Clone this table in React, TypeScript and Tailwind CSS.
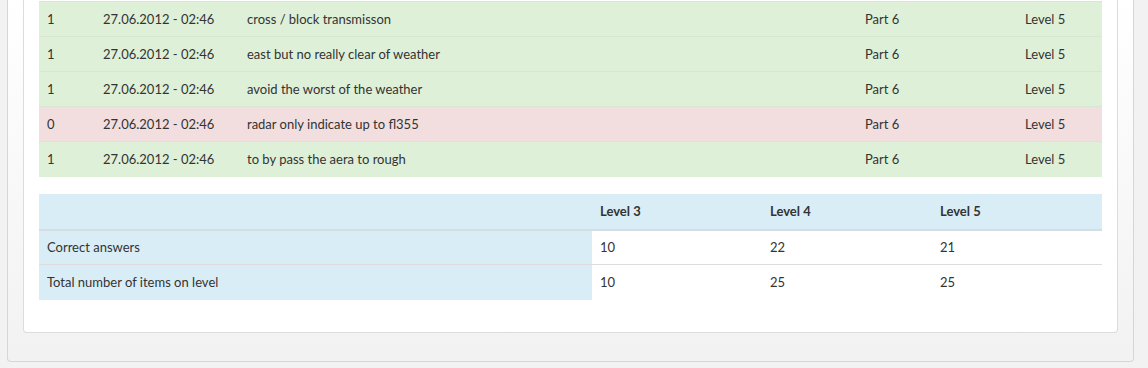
import React from "react";

const answers = [
  { score: 1, date: "27.06.2012 - 02:46", text: "cross / block transmisson", part: "Part 6", level: "Level 5" },
  { score: 1, date: "27.06.2012 - 02:46", text: "east but no really clear of weather", part: "Part 6", level: "Level 5" },
  { score: 1, date: "27.06.2012 - 02:46", text: "avoid the worst of the weather", part: "Part 6", level: "Level 5" },
  { score: 0, date: "27.06.2012 - 02:46", text: "radar only indicate up to fl355", part: "Part 6", level: "Level 5" },
  { score: 1, date: "27.06.2012 - 02:46", text: "to by pass the aera to rough", part: "Part 6", level: "Level 5" },
];

const summary = [
  { label: "Correct answers", values: [10, 22, 21] },
  { label: "Total number of items on level", values: [10, 25, 25] },
];

const App = () => {
  return (
    <div
      className="h-[368px] w-[1148px] overflow-hidden bg-[#f2f2f2] text-[13px] text-[#333]"
      style={{ fontFamily: "Lato, 'Open Sans', sans-serif" }}
    >
      <div className="ml-[7px] w-[1127px] rounded-b-[4px] border-x border-b border-[#d6d6d6] bg-gradient-to-b from-white to-[#f2f2f2] px-[15px] pb-[28px]">
        <div className="rounded-b-[4px] border-x border-b border-[#dcdcdc] bg-white px-[15px] pt-px pb-[32px]">
          <table className="w-full border-collapse">
            <tbody>
              {answers.map((row, i) => (
                <tr
                  key={i}
                  className={
                    "h-[35px] border-t border-[#d9e6d2] " +
                    (row.score ? "bg-[#dff0d8]" : "bg-[#f2dede]")
                  }
                >
                  <td className="w-[56px] px-2 pt-px pb-0">{row.score}</td>
                  <td className="w-[144px] px-2 pt-px pb-0">{row.date}</td>
                  <td className="w-[618px] px-2 pt-px pb-0">{row.text}</td>
                  <td className="w-[160px] px-2 pt-px pb-0">{row.part}</td>
                  <td className="px-2 pt-px pb-0">{row.level}</td>
                </tr>
              ))}
            </tbody>
          </table>

          <table className="mt-[17px] w-full border-collapse">
            <thead>
              <tr className="h-[36px] border-b-2 border-[#d5dde2] bg-[#d9edf7]">
                <th className="w-[553px] px-2 pt-px pb-0 text-left font-bold"></th>
                <th className="w-[170px] px-2 pt-px pb-0 text-left font-bold">Level 3</th>
                <th className="w-[170px] px-2 pt-px pb-0 text-left font-bold">Level 4</th>
                <th className="px-2 pt-px pb-0 text-left font-bold">Level 5</th>
              </tr>
            </thead>
            <tbody>
              {summary.map((row, i) => (
                <tr key={i} className={"h-[35px] " + (i > 0 ? "border-t border-[#dddddd]" : "")}>
                  <td className="bg-[#d9edf7] px-2 py-0">{row.label}</td>
                  {row.values.map((v, j) => (
                    <td key={j} className="px-2 py-0">
                      {v}
                    </td>
                  ))}
                </tr>
              ))}
            </tbody>
          </table>
        </div>
      </div>
    </div>
  );
};

export default App;
